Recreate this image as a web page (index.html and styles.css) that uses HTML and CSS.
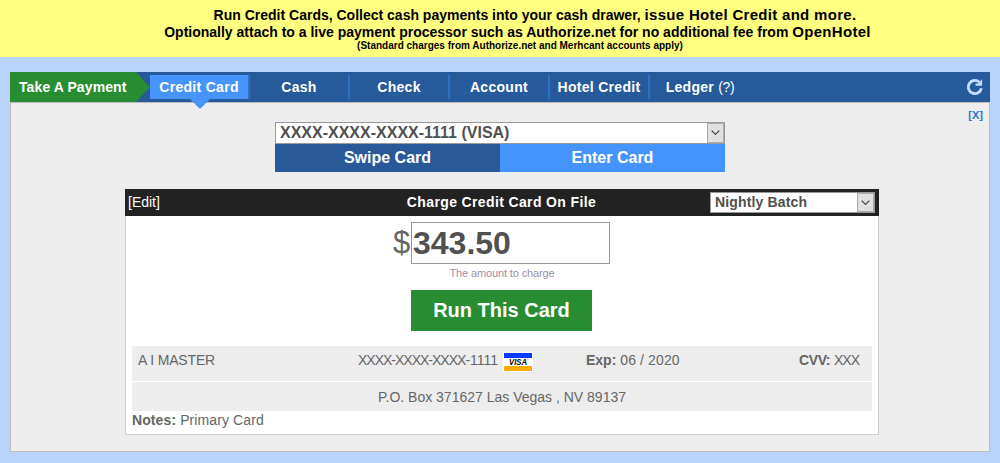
FILE: index.html
```html
<!DOCTYPE html>
<html lang="en">
<head>
<meta charset="utf-8">
<title>Take A Payment</title>
<link rel="stylesheet" href="styles.css">
</head>
<body>
<header class="banner">
  <div class="banner-line"><span class="b1">Run Credit Cards, Collect cash payments into your cash drawer,</span> <span class="b2">issue Hotel Credit and more.</span></div>
  <div class="banner-line"><span class="b3">Optionally attach to a live payment processor such as Authorize.net for no additional fee from</span> <span class="b4">OpenHotel</span></div>
  <div class="banner-note">(Standard charges from Authorize.net and Merhcant accounts apply)</div>
</header>
<main class="panel">
  <nav class="bar">
    <div class="title"><span class="t-title">Take A Payment</span></div>
    <svg class="arrow" width="14" height="30" viewBox="0 0 14 30"><path d="M0 0 14 15 0 30z" fill="#288d32"/></svg>
    <div class="tab active"><span class="t-credit">Credit Card</span></div>
    <div class="tab"><span class="t-cash">Cash</span></div>
    <div class="tab"><span class="t-check">Check</span></div>
    <div class="tab"><span class="t-account">Account</span></div>
    <div class="tab"><span class="t-hotel">Hotel Credit</span></div>
    <div class="tab last"><span class="t-ledger">Ledger</span><span class="help">(?)</span></div>
    <svg class="refresh" width="18" height="18" viewBox="0 0 18 18"><path d="M15.4 10.2A6.6 6.6 0 1 1 13.2 4" fill="none" stroke="#c3dcff" stroke-width="2.9"/><path d="M16.1 1.2v6.6H9.5V5.6l2.4-.2z" fill="#c3dcff"/></svg>
  </nav>
  <section class="content">
    <a class="close">[X]</a>
    <div class="picker">
      <div class="select big"><span class="t-card">XXXX-XXXX-XXXX-1111 (VISA)</span><i class="drop"><svg width="9" height="6" viewBox="0 0 9 6"><path d="M.7.7 4.5 4.5 8.3.7" fill="none" stroke="#444" stroke-width="1.2"/></svg></i></div>
      <div class="modes"><div class="mode swipe"><span class="t-swipe">Swipe Card</span></div><div class="mode enter"><span class="t-enter">Enter Card</span></div></div>
    </div>
    <div class="card">
      <div class="card-head">
        <div class="edit"><span class="t-edit">[Edit]</span></div>
        <div class="card-title"><span class="t-charge">Charge Credit Card On File</span></div>
        <div class="select small"><span class="t-batch">Nightly Batch</span><i class="drop"><svg width="9" height="6" viewBox="0 0 9 6"><path d="M.7.7 4.5 4.5 8.3.7" fill="none" stroke="#444" stroke-width="1.2"/></svg></i></div>
      </div>
      <div class="card-body">
        <div class="amount"><span class="dollar">$</span><div class="field"><span class="t-amount">343.50</span></div></div>
        <div class="caption"><span class="t-caption">The amount to charge</span></div>
        <div class="run"><span class="t-run">Run This Card</span></div>
        <div class="row details">
          <div class="holder"><span class="t-master">A I MASTER</span></div>
          <div class="number"><span class="t-number"><span class="tight">XXXX-XXXX-XXXX</span>-1111</span></div>
          <svg class="visa" width="30" height="20" viewBox="0 0 30 20"><rect width="30" height="20" fill="#fff"/><rect x="1" y="1" width="28" height="5" fill="#0639ff"/><rect x="1" y="14" width="28" height="5" fill="#ffab00"/><text x="6" y="13" font-size="9" textLength="18" lengthAdjust="spacingAndGlyphs" class="visa-text">VISA</text><circle cx="25" cy="7.7" r=".5" fill="#555"/></svg>
          <div class="exp"><b class="t-exp">Exp:</b> <span class="t-date">06 / 2020</span></div>
          <div class="cvv"><b class="t-cvv">CVV:</b> <span class="t-xxx">XXX</span></div>
        </div>
        <div class="row address"><span class="t-address">P.O. Box 371627 Las Vegas , NV 89137</span></div>
        <div class="notes"><b class="t-notes">Notes:</b> <span class="t-primary">Primary Card</span></div>
      </div>
    </div>
  </section>
</main>
</body>
</html>
```
FILE: styles.css
```css
* { box-sizing: border-box; }
body { margin: 0; width: 1000px; height: 463px; overflow: hidden; background: #b9d3fb; font: 14px/16px "Liberation Sans", Arial, sans-serif; color: #666; white-space: nowrap; }
svg { display: block; flex: none; }
.banner { height: 57px; padding-top: 6px; background: #ffff80; color: #000; font-weight: bold; display: flex; flex-direction: column; align-items: center; }
.banner-line { height: 17px; line-height: 17px; }
.banner-line:first-child { padding-left: 70px; }
.banner-line:nth-child(2) { padding-left: 35px; }
.banner-note { height: 10px; margin-top: 1px; font-size: 10px; line-height: 10px; padding-left: 40px; }
.b2, .b4 { font-size: 15px; letter-spacing: .3px; }
.panel { margin: 15px 10px 0; }
.bar { display: flex; height: 30px; background: #265a9a; color: #fff; font-weight: bold; }
.title { width: 126px; padding-left: 9px; line-height: 30px; letter-spacing: .1px; background: #288d32; }
.tab { width: 100px; height: 24px; margin-top: 3px; border-right: 2px solid #2e70c5; line-height: 24px; letter-spacing: .3px; display: flex; justify-content: center; }
.active { position: relative; background: #4694fc; }
.active::after { content: ""; position: absolute; left: 40px; top: 24px; border: 10px solid transparent; border-top-color: #4694fc; border-bottom: 0; }
.last { border: 0; }
.help { margin-left: 4px; font-weight: normal; letter-spacing: -.3px; }
.refresh { margin: 6px 6px 0 auto; }
.content { height: 350px; border: 1px solid #bbb; background: #ededed; display: flex; flex-direction: column; }
.close { align-self: flex-end; height: 19px; padding: 5px 6px 0 0; font-size: 11px; line-height: 14px; font-weight: bold; color: #2e75d2; }
.picker { width: 450px; margin-left: 264px; }
.select { display: flex; justify-content: space-between; background: #fff; border: 1px solid #999; color: #505050; font-weight: bold; padding-left: 4px; }
.big { height: 22px; font-size: 16px; line-height: 20px; }
.drop { display: flex; width: 17px; align-items: center; justify-content: center; background: #e1e1e1; border: 1px solid #aaa; }
.modes { display: flex; height: 28px; font-size: 16px; line-height: 27px; font-weight: bold; color: #fff; }
.mode { width: 225px; text-align: center; }
.swipe { background: #295998; }
.enter { background: #4594fc; }
.card { width: 754px; height: 246px; margin: 17px 0 0 114px; background: #fff; border: 1px solid #ccc; border-top: 0; }
.card-head { height: 27px; margin: 0 -1px; padding: 0 4px 0 3px; background: #222; color: #fff; display: flex; line-height: 27px; }
.edit { width: 230px; }
.card-title { width: 287px; text-align: center; font-weight: bold; letter-spacing: .37px; }
.small { width: 165px; height: 21px; margin: 3px 0 0 auto; line-height: 19px; letter-spacing: .15px; }
.card-body { padding: 6px 6px 0; }
.amount { display: flex; height: 42px; padding-left: 261px; }
.dollar { width: 18px; font-size: 31px; line-height: 42px; }
.field { width: 199px; height: 42px; border: 1px solid #999; color: #505050; font-size: 32px; line-height: 40px; font-weight: bold; padding-left: 1px; }
.caption { height: 26px; padding-top: 2px; text-align: center; font-size: 11px; line-height: 15px; letter-spacing: -.12px; color: #9b8ea8; }
.run { width: 181px; height: 41px; margin-left: 279px; background: #288d32; color: #fff; text-align: center; font-size: 20px; line-height: 40px; font-weight: bold; }
.row { background: #ededed; width: 740px; }
.details { height: 35px; margin-top: 15px; display: flex; line-height: 28px; padding-left: 6px; }
.holder { width: 220px; letter-spacing: -.15px; }
.number { width: 145px; }
.tight { letter-spacing: -1px; }
.visa { margin-top: 6px; }
.visa-text { font-family: "Liberation Sans", Arial, sans-serif; font-weight: bold; font-style: italic; fill: #000; }
.exp { margin-left: 53px; width: 213px; }
.t-date { letter-spacing: .12px; }
.t-cvv { letter-spacing: -.4px; }
.t-xxx { letter-spacing: -1px; }
.address { height: 29px; margin-top: 1px; text-align: center; line-height: 30px; }
.notes { line-height: 18px; letter-spacing: .1px; }
```
